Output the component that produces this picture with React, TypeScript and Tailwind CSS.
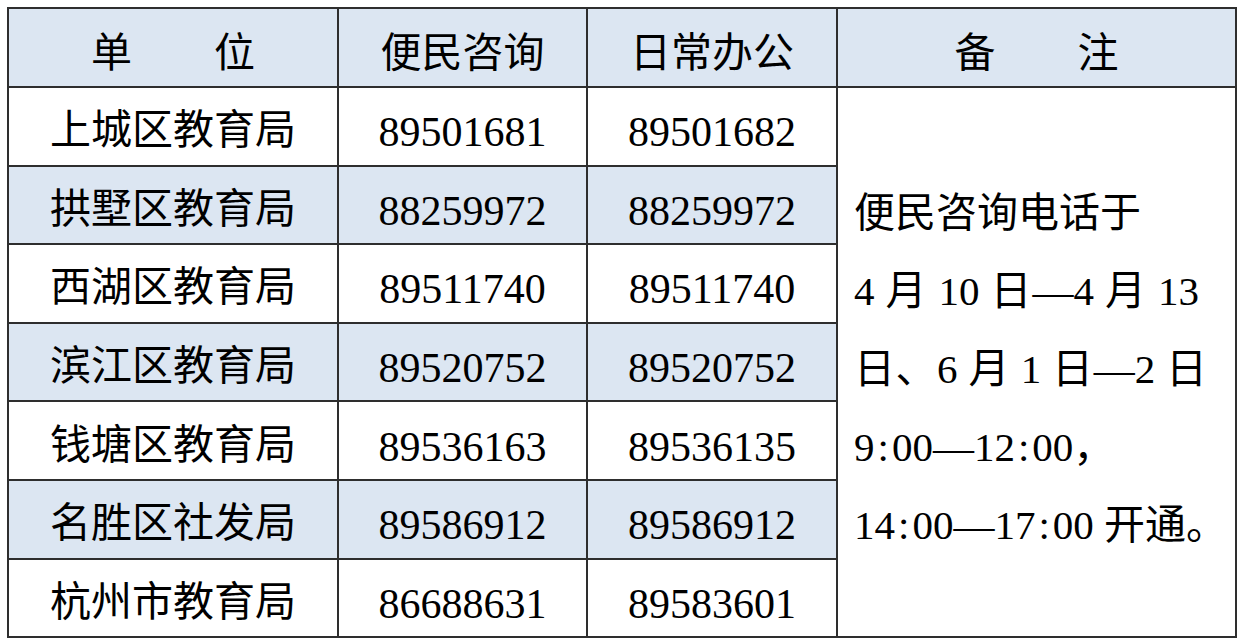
import React from "react";

const rows: [string, string, string][] = [
  ["上城区教育局", "89501681", "89501682"],
  ["拱墅区教育局", "88259972", "88259972"],
  ["西湖区教育局", "89511740", "89511740"],
  ["滨江区教育局", "89520752", "89520752"],
  ["钱塘区教育局", "89536163", "89536135"],
  ["名胜区社发局", "89586912", "89586912"],
  ["杭州市教育局", "86688631", "89583601"],
];

export default function App() {
  return (
    <div className="w-[1241px] h-[644px] bg-white pl-[7px] pt-[7px] text-black [font-family:'Liberation_Serif','Noto_Sans_CJK_SC',serif]">
      <table className="border-collapse border-2 border-[#2e2e2e] table-fixed w-[1228px] h-[630px] text-[41px] leading-none">
        <colgroup>
          <col className="w-[330px]" />
          <col className="w-[249px]" />
          <col className="w-[250px]" />
          <col className="w-[399px]" />
        </colgroup>
        <thead>
          <tr className="h-[79px] bg-[#dce6f2]">
            <th className="border-2 border-[#2e2e2e] font-normal text-center align-middle pt-[12px] whitespace-pre">单　　位</th>
            <th className="border-2 border-[#2e2e2e] font-normal text-center align-middle pt-[12px]">便民咨询</th>
            <th className="border-2 border-[#2e2e2e] font-normal text-center align-middle pt-[12px]">日常办公</th>
            <th className="border-2 border-[#2e2e2e] font-normal text-center align-middle pt-[12px] whitespace-pre">备　　注</th>
          </tr>
        </thead>
        <tbody>
          {rows.map((r, i) => {
            const bg = i % 2 === 1 ? "bg-[#dce6f2]" : "bg-white";
            return (
              <tr key={i} className="h-[78.6px]">
                <td className={`border-2 border-[#2e2e2e] text-center align-middle pt-[9px] ${bg}`}>{r[0]}</td>
                <td className={`border-2 border-[#2e2e2e] text-center align-middle pt-[12px] text-[42px] ${bg}`}>{r[1]}</td>
                <td className={`border-2 border-[#2e2e2e] text-center align-middle pt-[12px] text-[42px] ${bg}`}>{r[2]}</td>
                {i === 0 && (
                  <td rowSpan={7} className="border-2 border-[#2e2e2e] bg-white align-middle pl-[16px] pt-[14px]">
                    <div className="leading-[78px]">
                      <div>便民咨询电话于</div>
                      <div className="w-[345px] text-justify [text-align-last:justify]">4 月 10 日—4 月 13</div>
                      <div className="w-[353px] text-justify [text-align-last:justify]">日、6 月 1 日—2 日</div>
                      <div>9<span className="px-[3px]">:</span>00—12<span className="px-[3px]">:</span>00，</div>
                      <div>14<span className="px-[3px]">:</span>00—17<span className="px-[3px]">:</span>00 开通。</div>
                    </div>
                  </td>
                )}
              </tr>
            );
          })}
        </tbody>
      </table>
    </div>
  );
}
